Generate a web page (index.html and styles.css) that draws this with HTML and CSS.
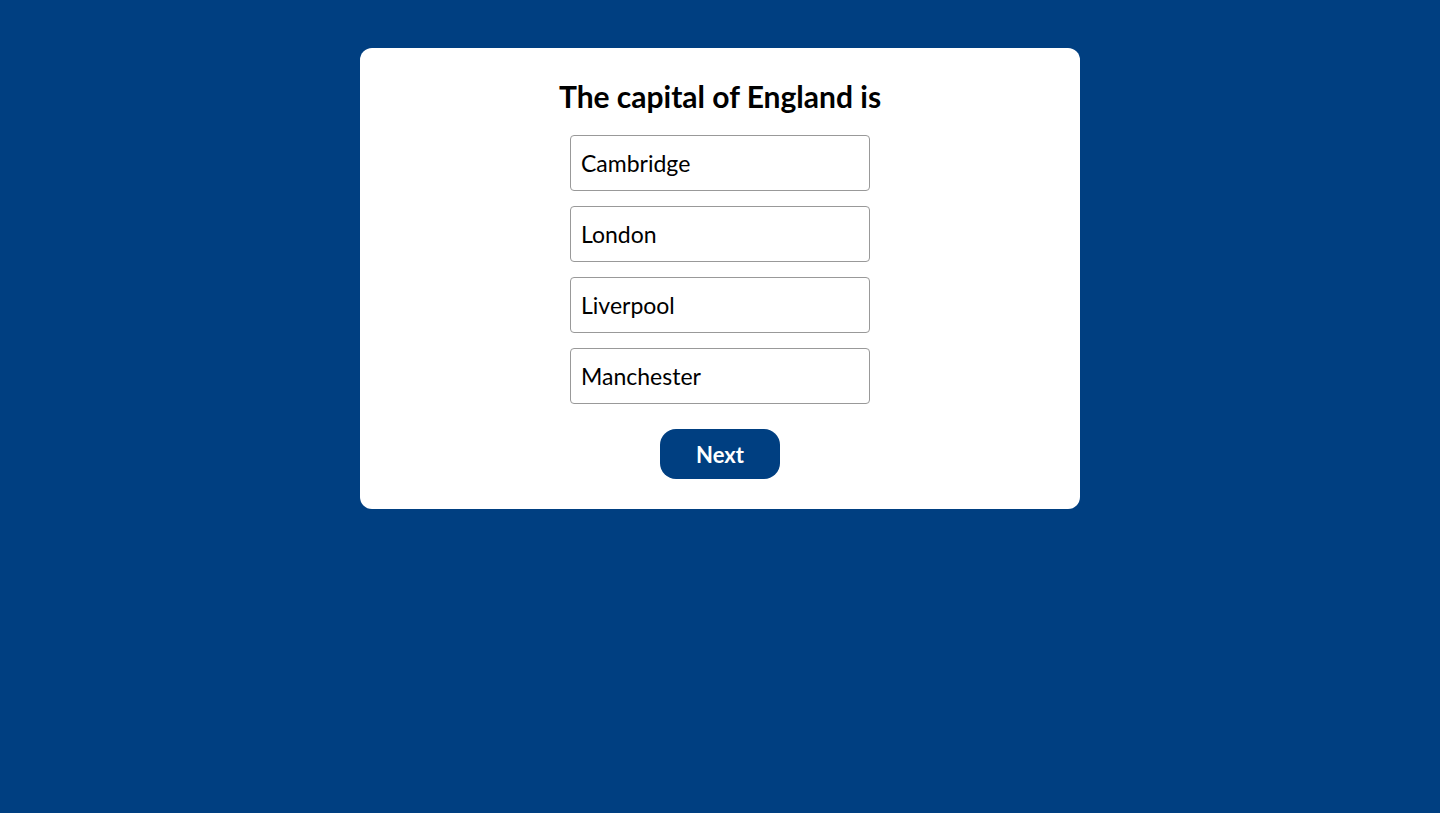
FILE: index.html
```html
<!DOCTYPE html>
<html lang="en">
<head>
<meta charset="utf-8">
<title>Quiz</title>
<link rel="stylesheet" href="styles.css">
</head>
<body>
<main class="page">
  <section class="card">
    <h1 class="question">The capital of England is</h1>
    <div class="options">
      <button class="option">Cambridge</button>
      <button class="option">London</button>
      <button class="option">Liverpool</button>
      <button class="option">Manchester</button>
    </div>
    <button class="next">Next</button>
  </section>
</main>
</body>
</html>
```
FILE: styles.css
```css
html, body {
  margin: 0;
  padding: 0;
  background: #003f81;
  font-family: Lato, "Open Sans", sans-serif;
}
.page {
  display: flex;
  justify-content: center;
  padding-top: 48px;
  min-height: 813px;
  box-sizing: border-box;
}
.card {
  width: 720px;
  background: #ffffff;
  border-radius: 12px;
  padding: 30px 0 30px;
  box-sizing: border-box;
  display: flex;
  flex-direction: column;
  align-items: center;
  height: 461px;
}
.question {
  margin: 0;
  font-size: 30px;
  font-weight: 700;
  line-height: 36px;
  color: #000;
}
.options {
  margin-top: 21px;
  display: flex;
  flex-direction: column;
  gap: 15px;
}
.option {
  width: 300px;
  height: 56px;
  box-sizing: border-box;
  border: 1px solid #999999;
  border-radius: 4px;
  background: #fff;
  padding: 0 10px;
  text-align: left;
  font-family: Lato, "Open Sans", sans-serif;
  font-size: 23px;
  color: #000;
}
.next {
  margin-top: 25px;
  width: 120px;
  height: 50px;
  border: none;
  border-radius: 16px;
  background: #003f81;
  color: #fff;
  font-family: Lato, "Open Sans", sans-serif;
  font-weight: 700;
  font-size: 22px;
}
```
